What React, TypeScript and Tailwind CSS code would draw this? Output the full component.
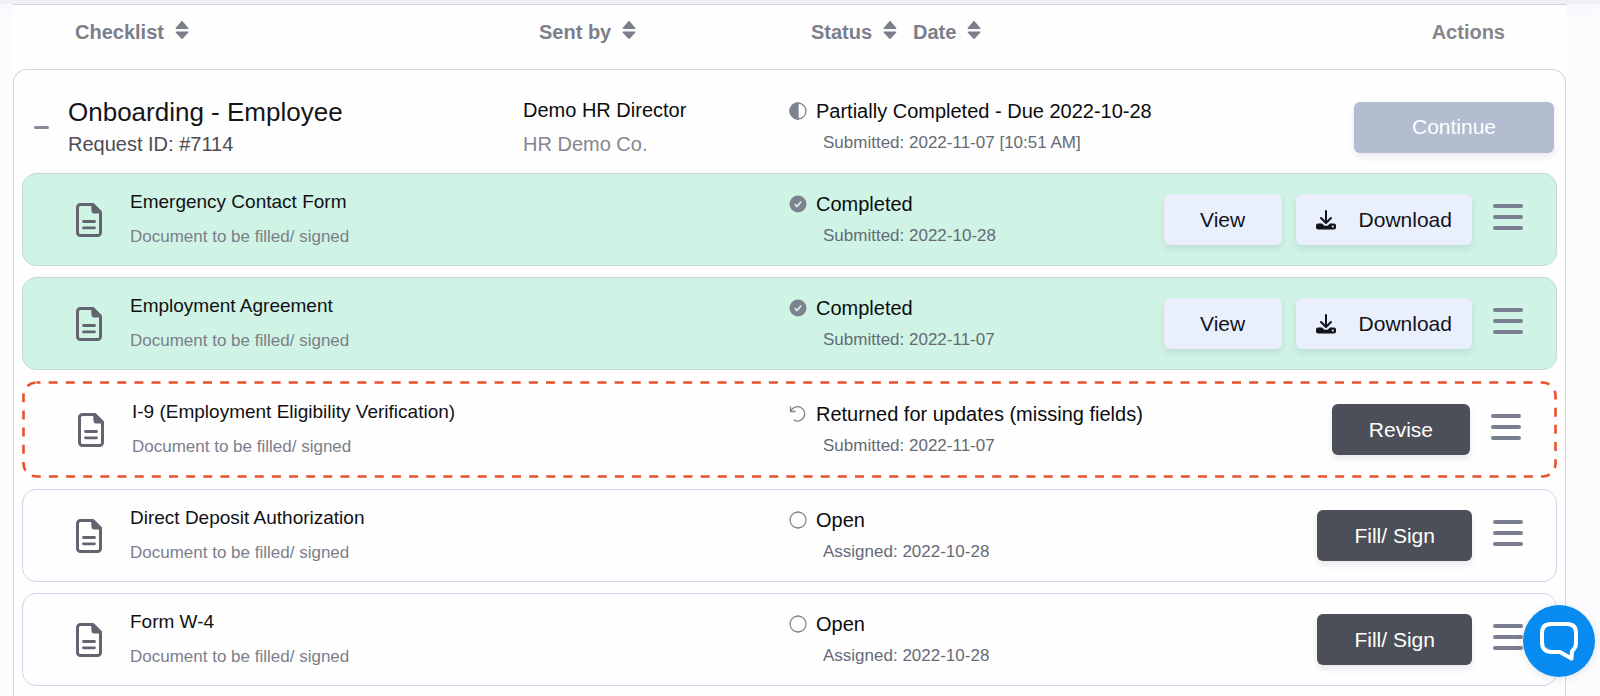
import React from "react";
import clsx from "clsx";

type Tone = "done" | "returned" | "open";

const columns = "grid grid-cols-[501fr_266fr_124fr_251fr_393fr]";

const documents: {
  title: string;
  status: string;
  detail: string;
  tone: Tone;
  action?: string;
}[] = [
  {
    title: "Emergency Contact Form",
    status: "Completed",
    detail: "Submitted: 2022-10-28",
    tone: "done",
  },
  {
    title: "Employment Agreement",
    status: "Completed",
    detail: "Submitted: 2022-11-07",
    tone: "done",
  },
  {
    title: "I-9 (Employment Eligibility Verification)",
    status: "Returned for updates (missing fields)",
    detail: "Submitted: 2022-11-07",
    tone: "returned",
    action: "Revise",
  },
  {
    title: "Direct Deposit Authorization",
    status: "Open",
    detail: "Assigned: 2022-10-28",
    tone: "open",
    action: "Fill/ Sign",
  },
  {
    title: "Form W-4",
    status: "Open",
    detail: "Assigned: 2022-10-28",
    tone: "open",
    action: "Fill/ Sign",
  },
];

const SortIcon = () => (
  <svg width="14" height="20" viewBox="0 0 14 20" fill="currentColor" aria-hidden="true">
    <path d="M7 1c.3 0 .6.100.8.4l5.400 6.300c.5.6.2 1.300-.6 1.300H1.400c-.8 0-1.100-.7-.6-1.300l5.400-6.300c.2-.3.5-.4.8-.4zM7 19c.3 0 .6-.100.8-.4l5.400-5.800c.5-.6.2-1.300-.6-1.300H1.400c-.8 0-1.100.7-.6 1.300l5.400 5.800c.2.3.5.4.8.4z" />
  </svg>
);

const FileIcon = () => (
  <svg
    className="shrink-0 text-[#62656f]"
    width="26"
    height="34"
    viewBox="0 0 26 34"
    fill="none"
    stroke="currentColor"
    strokeWidth="3"
    strokeLinecap="round"
    strokeLinejoin="round"
    aria-hidden="true"
  >
    <path d="M17 1.500H4.500a3 3 0 0 0-3 3v25a3 3 0 0 0 3 3h17a3 3 0 0 0 3-3V9z" />
    <path d="M16 1.500h2l6.500 6.500v2H17.500A1.500 1.500 0 0 1 16 8.500z" fill="currentColor" strokeWidth="1" />
    <path d="M7.500 18.500h11M7.500 24.800h11" strokeWidth="2.800" />
  </svg>
);

const StatusIcon = ({ tone }: { tone: Tone | "partial" }) => (
  <svg
    className="shrink-0 text-[#7e8390]"
    width="18"
    height="18"
    viewBox="0 0 18 18"
    fill="none"
    stroke="currentColor"
    strokeWidth="1.300"
    aria-hidden="true"
  >
    {tone === "done" && (
      <>
        <circle cx="9" cy="9" r="8.500" fill="currentColor" stroke="none" />
        <path d="M5.700 9.200l2.200 2.200 4.300-4.600" stroke="#e4f5ee" strokeWidth="1.600" />
      </>
    )}
    {tone === "partial" && (
      <>
        <circle cx="9" cy="9" r="8" />
        <path d="M9 1a8 8 0 0 0 0 16z" fill="currentColor" />
      </>
    )}
    {tone === "open" && <circle cx="9" cy="9" r="8" />}
    {tone === "returned" && <path d="M1.500 1.500v5h5M1.800 6.200A7.200 7.200 0 1 1 4.500 14.800" />}
  </svg>
);

const DownloadIcon = () => (
  <svg width="20" height="20" viewBox="0 0 20 20" fill="none" aria-hidden="true">
    <path d="M10 1v11M5 8l5 5 5-5" stroke="currentColor" strokeWidth="2" strokeLinecap="round" strokeLinejoin="round" />
    <path
      d="M2 13.500h4l2.500 2.200h3l2.500-2.200H18a2 2 0 0 1 2 2v2a2 2 0 0 1-2 2H2a2 2 0 0 1-2-2v-2a2 2 0 0 1 2-2z"
      fill="currentColor"
    />
    <circle cx="16.800" cy="16.500" r="1" fill="#e9effb" />
  </svg>
);

// Long dashes that a plain dashed border can't give
const DashedOutline = () => (
  <svg
    className="pointer-events-none absolute -inset-[3px] h-[calc(100%+6px)] w-[calc(100%+6px)] fill-none stroke-[#e8512b]"
    aria-hidden="true"
  >
    <rect
      x="1.500"
      y="1.500"
      rx="13"
      className="h-[calc(100%-3px)] w-[calc(100%-3px)]"
      strokeWidth="2.600"
      strokeDasharray="9 8.150"
      strokeDashoffset="5"
    />
  </svg>
);

const SortHeader = ({ label, className }: { label: string; className?: string }) => (
  <th scope="col" className={clsx("text-left", className)}>
    <button type="button" className="flex items-start gap-[11px] font-bold">
      {label}
      <SortIcon />
    </button>
  </th>
);

const StatusCell = ({ tone, status, detail }: { tone: Tone | "partial"; status: string; detail: string }) => (
  <td className="col-span-2 flex flex-col gap-2 whitespace-nowrap" colSpan={2}>
    <div className="flex items-center gap-[9px] text-[#0c0c0e]">
      <StatusIcon tone={tone} />
      {status}
    </div>
    <div className="pl-[34px] text-[17px] leading-6 text-[#666a75]">{detail}</div>
  </td>
);

const buttonBase =
  "flex h-[51px] items-center justify-center rounded-md text-[21px] shadow-[0_4px_6px_rgba(60,50,110,0.1)]";

export default function App() {
  return (
    <div className="flex min-h-screen flex-col bg-[#fcfcff] font-['Liberation_Sans',Arial,sans-serif] text-[20px] leading-6">
      <div className="h-1 shrink-0 bg-[#efeff4] shadow-[0_2px_16px_rgba(60,60,110,0.1)]" />
      <main className="flex grow flex-col pl-[13px] pr-[34px]">
        <table className="relative flex grow flex-col border-t border-[#ccd3e3] bg-[#fefefe]">
          <thead className="block px-[9px] pb-[25px] pt-[15px] text-[#7b7f8b]">
            <tr className={columns}>
              <SortHeader label="Checklist" className="pl-[53px]" />
              <SortHeader label="Sent by" className="pl-4" />
              <SortHeader label="Status" className="pl-[22px]" />
              <SortHeader label="Date" />
              <th scope="col" className="pr-[52px] text-right text-[#85858b]">
                Actions
              </th>
            </tr>
          </thead>
          <tbody className="flex grow flex-col gap-[11px] rounded-t-[14px] border border-b-0 border-[#d3d8e6] px-2">
            <tr className={clsx(columns, "-mb-[11px] items-center pb-[15px] pt-[26px]")}>
              <td className="flex items-center">
                <button type="button" aria-label="Collapse checklist" className="flex h-8 w-[46px] items-center pl-3">
                  <span className="h-[3px] w-[15px] rounded-full bg-[#858a98]" />
                </button>
                <div className="flex flex-col gap-0.5">
                  <h2 className="text-[26px] leading-8 text-[#151518]">Onboarding - Employee</h2>
                  <p className="leading-7 text-[#4c4c52]">Request ID: #7114</p>
                </div>
              </td>
              <td className="flex flex-col gap-2.5">
                <div className="text-[#0c0c0e]">Demo HR Director</div>
                <div className="text-[#85868e]">HR Demo Co.</div>
              </td>
              <StatusCell
                tone="partial"
                status="Partially Completed - Due 2022-10-28"
                detail="Submitted: 2022-11-07 [10:51 AM]"
              />
              <td className="flex justify-end pr-[3px]">
                <button type="button" className={clsx(buttonBase, "w-[200px] bg-[#b2bdd0] text-white")}>
                  Continue
                </button>
              </td>
            </tr>

            {documents.map((doc) => (
              <tr
                key={doc.title}
                className={clsx(
                  columns,
                  "relative items-center rounded-[14px] py-4",
                  doc.tone === "done" && "border border-[#c2d5e0] bg-[#cff3e4]",
                  doc.tone === "returned" && "border-3 border-transparent",
                  doc.tone === "open" && "border border-[#cdd5e8]"
                )}
              >
                <td className="col-span-2 flex items-center gap-7 pl-[53px]" colSpan={2}>
                  {doc.tone === "returned" && <DashedOutline />}
                  <FileIcon />
                  <div className="flex flex-col gap-[11px]">
                    <div className="text-[19px] text-[#111114]">{doc.title}</div>
                    <div className="text-[17px] text-[#7b7e8b]">Document to be filled/ signed</div>
                  </div>
                </td>
                <StatusCell tone={doc.tone} status={doc.status} detail={doc.detail} />
                <td className="flex items-center justify-end pr-[33px]">
                  {doc.tone === "done" ? (
                    <div className="flex gap-[14px] text-[#12141c]">
                      <button type="button" className={clsx(buttonBase, "w-[118px] bg-[#e9effb]")}>
                        View
                      </button>
                      <button type="button" className={clsx(buttonBase, "gap-[23px] bg-[#e9effb] px-5")}>
                        <DownloadIcon />
                        Download
                      </button>
                    </div>
                  ) : (
                    <button type="button" className={clsx(buttonBase, "bg-[#4c4f57] px-[37px] text-white")}>
                      {doc.action}
                    </button>
                  )}
                  <button
                    type="button"
                    aria-label={`More actions for ${doc.title}`}
                    className="mb-[5px] ml-[21px] flex w-[30px] flex-col gap-[7px]"
                  >
                    <span className="h-1 rounded-full bg-[#7a7f90]" />
                    <span className="h-1 rounded-full bg-[#7a7f90]" />
                    <span className="h-1 rounded-full bg-[#7a7f90]" />
                  </button>
                </td>
              </tr>
            ))}
          </tbody>
        </table>
      </main>

      <button
        type="button"
        aria-label="Open chat"
        className="fixed bottom-[19px] right-[5px] flex size-[72px] items-center justify-center rounded-full bg-[#078bf0] text-white shadow-[0_2px_8px_rgba(0,0,0,0.1)]"
      >
        <svg
          width="40"
          height="40"
          viewBox="0 0 40 40"
          fill="none"
          stroke="currentColor"
          strokeWidth="4"
          strokeLinejoin="round"
          aria-hidden="true"
        >
          <path d="M12 3h16q9 0 9 9v10q0 5-4 8l-.5 7.500L21 31h-8q-10 0-10-10V12q0-9 9-9z" />
        </svg>
      </button>
    </div>
  );
}
